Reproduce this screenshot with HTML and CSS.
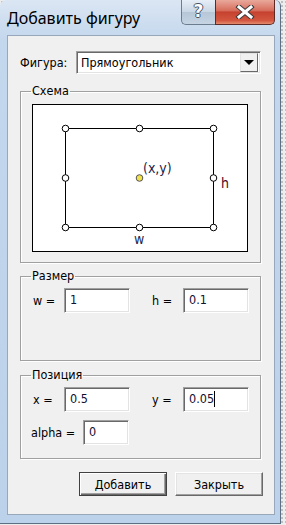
FILE: index.html
```html
<!DOCTYPE html>
<html>

<head>
    <meta charset='UTF-8'>
    <meta name='viewport' content='width=device-width, initial-scale=1.0'>
    <title>Добавить фигуру</title>
    <link rel="stylesheet" href="styles.css">
</head>

<body>
    <div class="window">
        <!-- заголовок окна -->
        <div class="titlebar">
            <div class="caption">Добавить фигуру</div>
            <div class="caption-btns">
                <div class="btn-help">?</div>
                <div class="btn-close">
                    <svg width="20" height="14" viewBox="0 0 20 14">
                        <path d="M4 2 L16 12 M16 2 L4 12" stroke="#3a3a3a" stroke-width="5" stroke-linecap="square" />
                        <path d="M4 2 L16 12 M16 2 L4 12" stroke="#fff" stroke-width="3" stroke-linecap="square" />
                    </svg>
                </div>
            </div>
        </div>

        <div class="client">
            <div class="figure-row">
                <span class="lbl-figure">Фигура:</span>
                <div class="combo">
                    <span class="combo-text">Прямоугольник</span>
                    <span class="combo-btn"><i class="arrow"></i></span>
                </div>
            </div>

            <fieldset class="group group-scheme">
                <legend>Схема</legend>
                <svg class="scheme" width="216" height="148" viewBox="0 0 216 148">
                    <rect x="0.5" y="0.5" width="215" height="147" fill="#fff" stroke="#000" />
                    <rect x="33.5" y="24.5" width="148" height="99" fill="none" stroke="#000" />
                    <g fill="#fff" stroke="#000">
                        <circle cx="33.5" cy="24.5" r="3.3" />
                        <circle cx="107.5" cy="24.5" r="3.3" />
                        <circle cx="181.5" cy="24.5" r="3.3" />
                        <circle cx="33.5" cy="74" r="3.3" />
                        <circle cx="181.5" cy="74" r="3.3" />
                        <circle cx="33.5" cy="123.5" r="3.3" />
                        <circle cx="107.5" cy="123.5" r="3.3" />
                        <circle cx="181.5" cy="123.5" r="3.3" />
                    </g>
                    <circle cx="107.5" cy="74" r="3.3" fill="#f2e24a" stroke="#555" />
                    <text x="111" y="69" class="t-xy">(x,y)</text>
                    <text x="189" y="84" class="t-h">h</text>
                    <text x="102" y="140" class="t-w">w</text>
                </svg>
            </fieldset>

            <fieldset class="group group-size">
                <legend>Размер</legend>
                <div class="row">
                    <span class="lbl">w =</span>
                    <div class="edit">1</div>
                    <span class="lbl lbl-second">h =</span>
                    <div class="edit">0.1</div>
                </div>
            </fieldset>

            <fieldset class="group group-pos">
                <legend>Позиция</legend>
                <div class="row">
                    <span class="lbl">x =</span>
                    <div class="edit">0.5</div>
                    <span class="lbl lbl-second">y =</span>
                    <div class="edit">0.05<span class="caret"></span></div>
                </div>
                <div class="row row-alpha">
                    <span class="lbl lbl-alpha">alpha =</span>
                    <div class="edit edit-small">0</div>
                </div>
            </fieldset>

            <div class="buttons">
                <button class="btn btn-default">Добавить</button>
                <button class="btn">Закрыть</button>
            </div>
        </div>
    </div>
</body>

</html>
```

FILE: styles.css
```css
/* фон рабочего стола с точками */
body {
    margin: 0;
    width: 286px;
    height: 525px;
    overflow: hidden;
    background-color: #ededed;
    background-image: radial-gradient(circle, #8a8a8a 0.6px, transparent 0.8px);
    background-size: 4px 4px;
    font-family: "DejaVu Sans Condensed", "DejaVu Sans", sans-serif;
    font-stretch: condensed;
    font-size: 12.5px;
    color: #000;
}

/* окно */
.window {
    width: 281px;
    height: 524px;
    box-sizing: border-box;
    background: linear-gradient(#dbe6f3, #c3d7ed 40px, #bcd2ea);
    border-right: 1px solid #5d6f82;
    border-bottom: 1px solid #5d6f82;
    border-radius: 6px 6px 0 0;
    display: flex;
    flex-direction: column;
}

.titlebar {
    height: 35px;
    display: flex;
    justify-content: space-between;
}

.caption {
    padding: 7px 0 0 7px;
    font-family: "Noto Sans", "Open Sans", sans-serif;
    font-stretch: normal;
    font-size: 16px;
    color: #000;
}

.caption-btns {
    display: flex;
    margin-right: 5px;
    height: 25px;
}

.btn-help {
    width: 34px;
    box-sizing: border-box;
    border: 1px solid #6d7d90;
    border-top: none;
    border-right: none;
    border-radius: 0 0 0 5px;
    background: linear-gradient(#e6eef7, #c9d6e4 50%, #b7c7d8 52%, #c6d4e3);
    text-align: center;
    font-family: "DejaVu Sans", sans-serif;
    font-stretch: normal;
    font-weight: bold;
    font-size: 17px;
    line-height: 23px;
    color: #fff;
    text-shadow: -1px 0 #4a5563, 1px 0 #4a5563, 0 -1px #4a5563, 0 1px #4a5563;
}

.btn-close {
    width: 60px;
    box-sizing: border-box;
    border: 1px solid #5e2a26;
    border-top: none;
    border-radius: 0 0 5px 0;
    background: linear-gradient(#e9a99c, #d66c5a 45%, #c5412f 50%, #d3563f 85%, #e28a6d);
    display: flex;
    align-items: center;
    justify-content: center;
}

/* клиентская область */
.client {
    margin: 0 5px 0 7px;
    height: 480px;
    box-sizing: border-box;
    border: 1px solid #98a8ba;
    background: #f0f0f0;
    padding-top: 15px;
}

.figure-row {
    display: flex;
    align-items: center;
    padding-left: 12px;
}

.lbl-figure {
    width: 56px;
}

/* комбобокс */
.combo {
    width: 185px;
    height: 23px;
    box-sizing: border-box;
    border: 1px solid;
    border-color: #a0a0a0 #fff #fff #a0a0a0;
    box-shadow: inset 1px 1px 0 #696969, inset -1px -1px 0 #e3e3e3;
    background: #fff;
    display: flex;
    align-items: center;
    justify-content: space-between;
    padding: 0 2px 0 4px;
}

.combo-btn {
    width: 18px;
    height: 19px;
    box-sizing: border-box;
    background: #f0f0f0;
    border: 1px solid;
    border-color: #e3e3e3 #696969 #696969 #e3e3e3;
    display: flex;
    align-items: center;
    justify-content: center;
}

.arrow {
    width: 0;
    height: 0;
    border-left: 5px solid transparent;
    border-right: 5px solid transparent;
    border-top: 5px solid #000;
}

/* рамки групп */
.group {
    margin: 9px 0 0 12px;
    width: 241px;
    box-sizing: border-box;
    padding: 0;
    border: 1px solid #a0a0a0;
    box-shadow: 1px 1px 0 #fff, inset 1px 1px 0 #fff;
}

.group legend {
    margin-left: 10px;
    padding: 0 1px;
    line-height: 16px;
}

.scheme {
    display: block;
    margin: 5px 0 10px 11px;
}

.scheme text {
    font-family: "DejaVu Sans Condensed", "DejaVu Sans", sans-serif;
    font-stretch: condensed;
    font-size: 14px;
}

.t-xy {
    fill: #1c1c4a;
}

.t-h {
    fill: #4e0a26;
}

.t-w {
    fill: #1c2a55;
}

.group-size {
    margin-top: 5px;
    height: 93px;
}

.group-pos {
    margin-top: 6px;
    height: 92px;
}

.row {
    display: flex;
    align-items: center;
    margin: 4px 0 0 12px;
}

.row-alpha {
    margin: 8px 0 0 10px;
}

.lbl {
    width: 31px;
}

.lbl-second {
    margin-left: 22px;
}

.lbl-alpha {
    width: 52px;
}

/* поле ввода */
.edit {
    width: 66px;
    height: 25px;
    box-sizing: border-box;
    border: 1px solid;
    border-color: #a0a0a0 #fff #fff #a0a0a0;
    box-shadow: inset 1px 1px 0 #696969, inset -1px -1px 0 #e3e3e3;
    background: #fff;
    padding: 3px 5px 0;
    line-height: 15px;
    color: #101030;
}

.edit-small {
    width: 46px;
}

.caret {
    display: inline-block;
    width: 1px;
    height: 16px;
    background: #000;
    vertical-align: top;
}

/* кнопки */
.buttons {
    display: flex;
    justify-content: flex-end;
    gap: 8px;
    margin-top: 13px;
    padding-right: 11px;
}

.btn {
    width: 88px;
    height: 24px;
    box-sizing: border-box;
    font-family: inherit;
    font-stretch: condensed;
    font-size: 12.5px;
    color: #000;
    background: #f0f0f0;
    border: 1px solid;
    border-color: #fff #696969 #696969 #fff;
    box-shadow: inset -1px -1px 0 #a0a0a0, inset 1px 1px 0 #e3e3e3;
    padding: 0;
}

.btn-default {
    border-color: #404040;
    box-shadow: inset 1px 1px 0 #fff, inset -1px -1px 0 #696969, inset -2px -2px 0 #a0a0a0;
}
```
